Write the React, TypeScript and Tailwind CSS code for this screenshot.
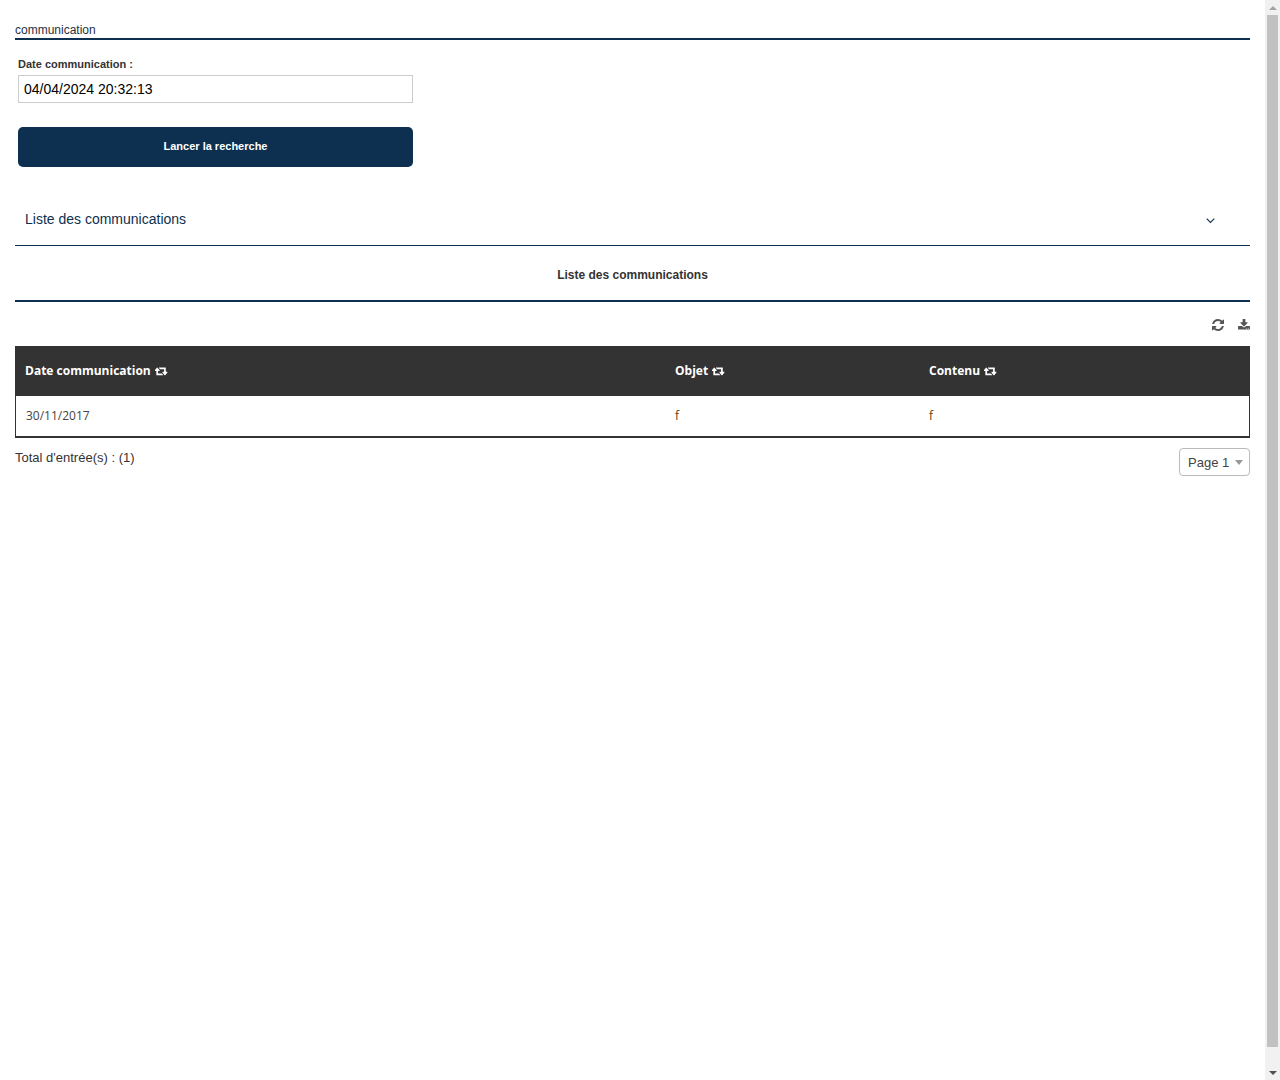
const columns = [
  { label: "Date communication", width: "w-[650px]" },
  { label: "Objet", width: "w-[254px]" },
  { label: "Contenu", width: "" },
];

// Font Awesome 4 glyphs, the icon package only carries the slimmer v5 shapes
const SortIcon = () => (
  <svg width="13" height="12" viewBox="0 0 1920 1792" fill="currentColor">
    <path d="M1216 1504q0 13-9.5 22.5t-22.5 9.5h-960q-8 0-13.5-2t-9-7-5.5-8-3-11.5-1-11.5v-600h-192q-26 0-45-19t-19-45q0-24 15-41l320-384q19-22 49-22t49 22l320 384q15 17 15 41 0 26-19 45t-45 19h-192v384h576q16 0 25 11l160 192q7 10 7 21zm640-416q0 24-15 41l-320 384q-20 23-49 23t-49-23l-320-384q-15-17-15-41 0-26 19-45t45-19h192v-384h-576q-16 0-25-12l-160-192q-7-9-7-20 0-13 9.5-22.5t22.5-9.5h960q8 0 13.5 2t9 7 5.5 8.5 3 11.5 1 11.5v600h192q26 0 45 19t19 45z" />
  </svg>
);

const RefreshIcon = () => (
  <svg width="12" height="12" viewBox="128 128 1536 1536" fill="currentColor">
    <path d="M1639 1056q0 5-1 7-64 268-268 434.5t-478 166.5q-146 0-282.5-55t-243.5-157l-129 129q-19 19-45 19t-45-19-19-45v-448q0-26 19-45t45-19h448q26 0 45 19t19 45-19 45l-137 137q71 66 161 102t187 36q134 0 250-65t186-179q11-17 53-117 8-23 30-23h192q13 0 22.5 9.5t9.5 22.5zm25-800v448q0 26-19 45t-45 19h-448q-26 0-45-19t-19-45 19-45l138-138q-148-137-349-137-134 0-250 65t-186 179q-11 17-53 117-8 23-30 23h-199q-13 0-22.5-9.5t-9.5-22.5v-7q65-268 270-434.5t480-166.5q146 0 284 55.5t245 156.5l130-129q19-19 45-19t45 19 19 45z" />
  </svg>
);

const DownloadIcon = () => (
  <svg width="12" height="12" viewBox="64 64 1664 1664" fill="currentColor">
    <path d="M1344 1344q0-26-19-45t-45-19-45 19-19 45 19 45 45 19 45-19 19-45zm256 0q0-26-19-45t-45-19-45 19-19 45 19 45 45 19 45-19 19-45zm128-224v320q0 40-28 68t-68 28h-1472q-40 0-68-28t-28-68v-320q0-40 28-68t68-28h465l135 136q58 56 136 56t136-56l136-136h464q40 0 68 28t28 68zm-325-569q17 41-14 70l-448 448q-18 19-45 19t-45-19l-448-448q-31-29-14-70 17-39 59-39h256v-448q0-26 19-45t45-19h256q26 0 45 19t19 45v448h256q42 0 59 39z" />
  </svg>
);

const Scrollbar = () => (
  <div className="flex h-full w-[15px] shrink-0 flex-col items-center bg-[#f1f1f1]">
    <div className="flex h-[15px] w-full items-center justify-center">
      <span className="size-0 border-x-[4px] border-b-[4px] border-x-transparent border-b-[#a3a3a3]" />
    </div>
    <div className="h-[1032px] w-[11px] bg-[#c1c1c1]" />
    <div className="mt-auto flex h-[15px] w-full items-center justify-center">
      <span className="size-0 border-x-[4px] border-t-[4px] border-x-transparent border-t-[#505050]" />
    </div>
  </div>
);

const App = () => {
  return (
    <div className="flex h-[1080px] overflow-hidden bg-white font-['Liberation_Sans',Arial,sans-serif] text-[#333]">
      <div className="min-w-0 flex-1 px-[15px] pt-[22px]">
        <div className="h-[18px] border-b-2 border-[#0d3050] pt-px text-xs leading-[15px] text-[#1f2f3f]">communication</div>

        {/* Search form */}
        <div className="ml-[3px] w-[395px] pt-[18px]">
          <label className="block text-[11px] leading-[13px] font-bold text-[#333]">Date communication :</label>
          <input
            readOnly
            value="04/04/2024 20:32:13"
            className="mt-[4px] block h-7 w-full border border-[#ccc] bg-white px-[5px] text-sm text-black outline-none"
          />
          <button className="mt-6 block h-10 w-full rounded-[5px] bg-[#0d3050] pb-[2px] text-[11px] font-bold text-white">
            Lancer la recherche
          </button>
        </div>

        {/* Accordion header */}
        <div className="mt-[30px] flex h-[49px] items-center justify-between border-b border-[#0d3050] pr-[34px] pl-[10px]">
          <span className="mb-[5px] text-sm text-[#0d3050]">Liste des communications</span>
          <svg width="12" height="8" viewBox="0 0 12 8" fill="none" stroke="#0d3050" strokeWidth="1.1" className="-mt-px">
            <path d="M2.7 1.7 6.5 5.5 10.3 1.7" />
          </svg>
        </div>

        <div className="flex h-[56px] items-center justify-center border-b-2 border-[#0d3050] pt-[3px] text-xs font-bold text-[#333]">
          Liste des communications
        </div>

        {/* Toolbar */}
        <div className="flex h-[44px] items-center justify-end gap-[14px] pt-[2px] text-[#555]">
          <RefreshIcon />
          <DownloadIcon />
        </div>

        <table className="w-full table-fixed border-separate border-spacing-0 font-['Open_Sans',sans-serif] text-xs">
          <thead>
            <tr className="h-[50px] bg-[#333] text-left text-white">
              {columns.map((col) => (
                <th key={col.label} className={`px-[10px] font-bold ${col.width}`}>
                  <span className="inline-flex items-center gap-1">
                    {col.label}
                    <SortIcon />
                  </span>
                </th>
              ))}
            </tr>
          </thead>
          <tbody>
            <tr className="h-[42px] text-[#444]">
              <td className="border-b-2 border-l border-[#333] pr-[10px] pb-px pl-[10px]">30/11/2017</td>
              <td className="border-b-2 border-[#333] px-[10px] pb-px text-[#663c0a]">f</td>
              <td className="border-r border-b-2 border-[#333] px-[10px] pb-px text-[#663c0a]">f</td>
            </tr>
          </tbody>
        </table>

        <div className="mt-[10px] flex items-start justify-between">
          <span className="mt-[2px] text-[13px] leading-[15px] text-[#333]">Total d'entrée(s) : (1)</span>
          <div className="flex h-7 w-[71px] items-center gap-[6px] rounded border border-[#bbb] pt-px pl-2 text-[13px] text-[#444]">
            Page 1
            <span className="size-0 border-x-[4px] border-t-[5px] border-x-transparent border-t-[#999]" />
          </div>
        </div>
      </div>
      <Scrollbar />
    </div>
  );
};

export default App;
